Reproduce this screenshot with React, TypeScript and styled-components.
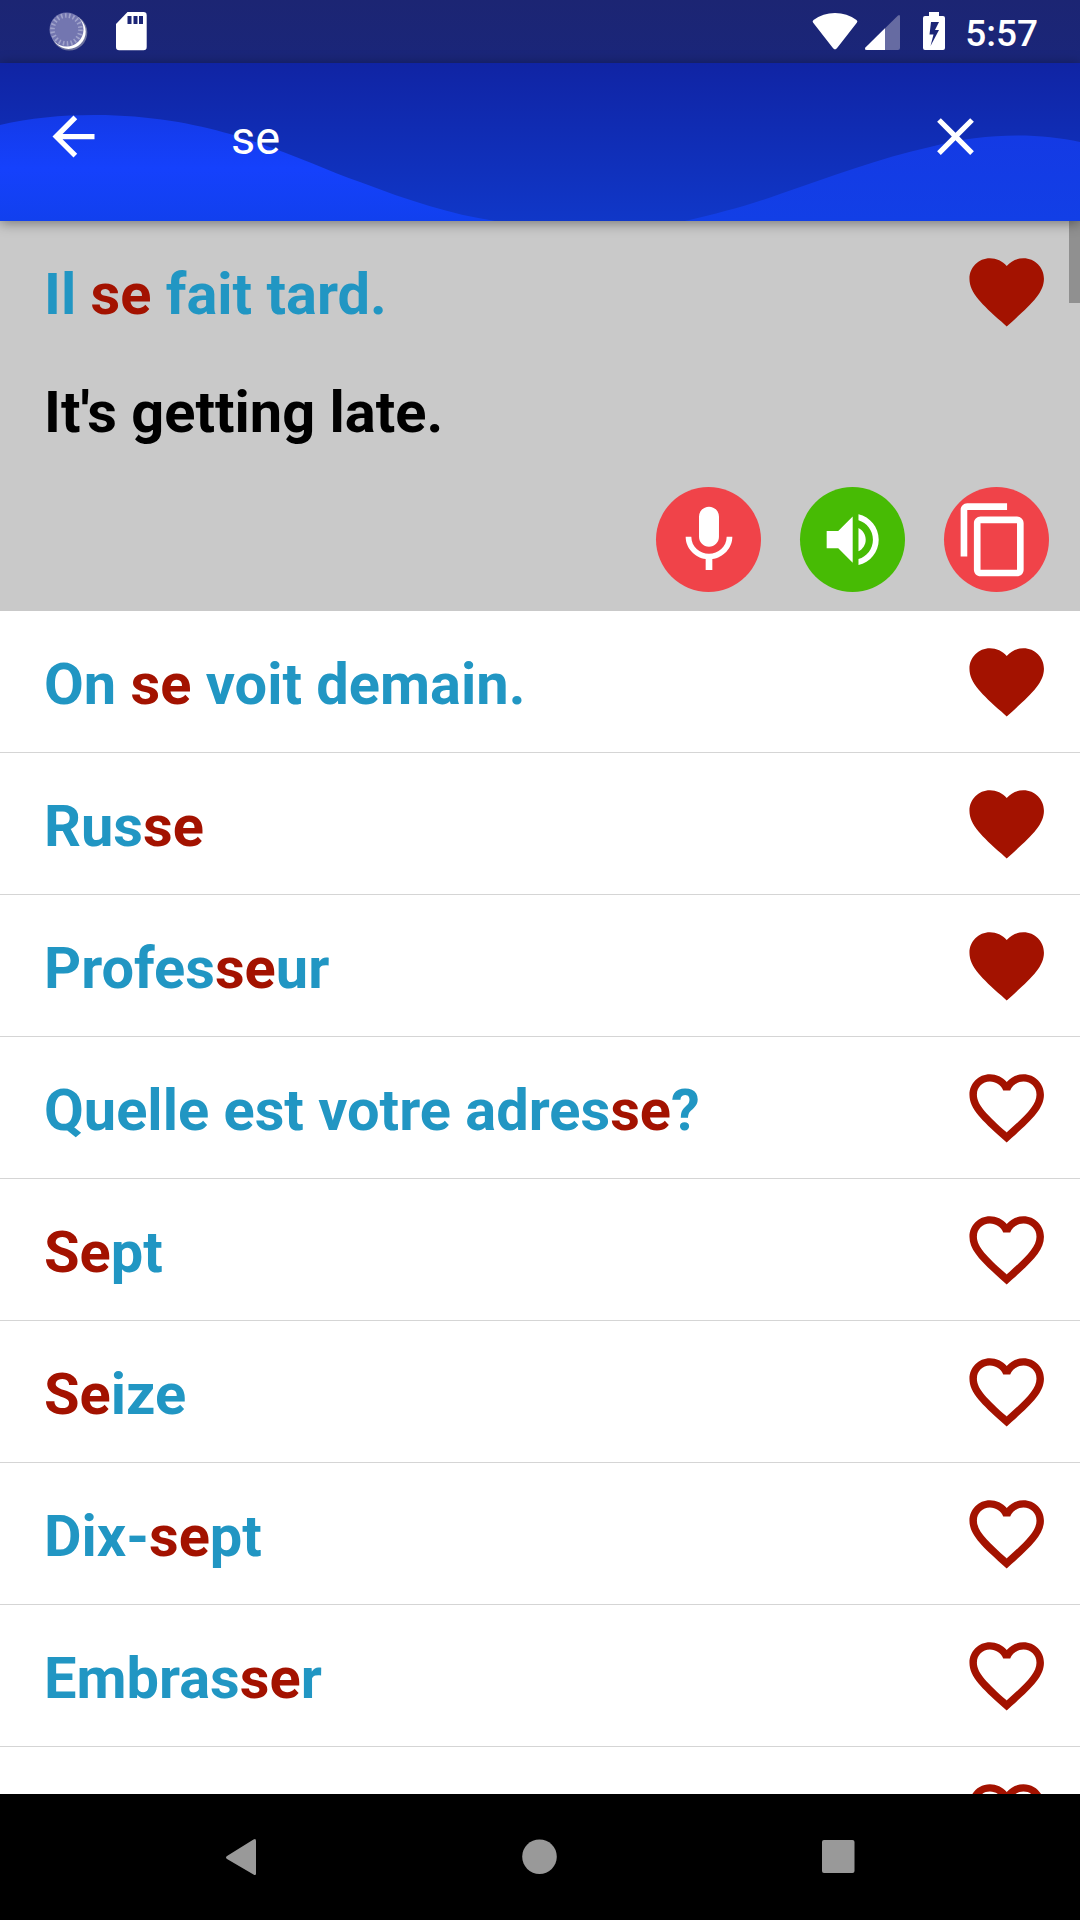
import React from "react";
import styled, { createGlobalStyle } from "styled-components";

const Global = createGlobalStyle`
  html, body { margin: 0; padding: 0; background: #000; }
  * { box-sizing: border-box; }
  svg { display: block; flex: none; }
`;

const Screen = styled.div`
  width: 1080px;
  height: 1920px;
  display: flex;
  flex-direction: column;
  overflow: hidden;
  background: #fff;
  font-family: Roboto, "Liberation Sans", sans-serif;
`;

const StatusBar = styled.div`
  height: 63px;
  flex: none;
  display: flex;
  justify-content: space-between;
  padding: 0 42px 0 48px;
  background: linear-gradient(#1c2573, #1a267a);
`;

const StatusGroup = styled.div`
  display: flex;
  align-items: flex-start;
`;

const Clock = styled.span`
  margin-left: 18px;
  padding-top: 12px;
  font-size: 37px;
  font-weight: 500;
  line-height: 43px;
  color: #fff;
`;

const Header = styled.header`
  height: 158px;
  flex: none;
  display: grid;
  position: relative;
  z-index: 1;
  box-shadow: 0 2px 12px rgba(0, 0, 0, 0.42);
  > * { grid-area: 1 / 1; }
`;

const Toolbar = styled.div`
  position: relative;
  display: flex;
  align-items: center;
  padding: 0 93px 12px 42px;
`;

const Query = styled.div`
  flex: 1;
  padding: 4px 0 0 126px;
  font-size: 47px;
  line-height: 56px;
  color: #fff;
`;

const IconButton = styled.button`
  display: flex;
  padding: 0;
  border: 0;
  background: none;
  color: #fff;
`;

const List = styled.main`
  flex: 1;
  min-height: 0;
  overflow: hidden;
  position: relative;
`;

const ScrollThumb = styled.div`
  position: absolute;
  top: 0;
  right: 0;
  width: 11px;
  height: 82px;
  background: #909090;
`;

const Row = styled.div<{ $open?: boolean }>`
  height: ${(p) => (p.$open ? 390 : 142)}px;
  padding: 26px 29px 0 44px;
  background: ${(p) => (p.$open ? "#c9c9c9" : "#fff")};
  border-bottom: ${(p) => (p.$open ? "0" : "1px solid #d5d5d5")};
`;

const RowHead = styled.div`
  height: 89px;
  display: flex;
  justify-content: space-between;
  align-items: flex-start;
`;

const Phrase = styled.div`
  padding-top: 13px;
  font-size: 57.75px;
  font-weight: 700;
  line-height: 68px;
  white-space: pre;
  color: #2196c3;
`;

const Match = styled.span`
  color: #a31200;
`;

const Translation = styled(Phrase)`
  color: #000;
  padding-top: 42px;
`;

const Actions = styled.div`
  display: flex;
  justify-content: flex-end;
  gap: 39px;
  padding: 41px 2px 0 0;
`;

const Round = styled.button<{ $color: string; $shift?: number }>`
  width: 105px;
  height: 105px;
  display: flex;
  align-items: center;
  justify-content: center;
  border: 0;
  border-radius: 50%;
  padding: 0 ${(p) => p.$shift ?? 0}px 0 0;
  background: ${(p) => p.$color};
  color: #fff;
`;

const NavBar = styled.nav`
  height: 126px;
  flex: none;
  display: flex;
  justify-content: space-between;
  align-items: center;
  padding: 0 222px;
  background: #000;
  color: #999;
`;

const PATHS = {
  back: "M20 11H7.83l5.59-5.59L12 4l-8 8 8 8 1.41-1.41L7.83 13H20v-2z",
  close: "M19 6.41L17.59 5 12 10.59 6.41 5 5 6.41 10.59 12 5 17.59 6.41 19 12 13.41 17.59 19 19 17.59 13.41 12z",
  mic: "M12 14c1.66 0 2.99-1.34 2.99-3L15 5c0-1.66-1.34-3-3-3S9 3.34 9 5v6c0 1.66 1.34 3 3 3zm5.3-3c0 3-2.54 5.1-5.3 5.1S6.7 14 6.7 11H5c0 3.41 2.72 6.23 6 6.72V21h2v-3.28c3.28-.48 6-3.3 6-6.72h-1.7z",
  volume: "M3 9v6h4l5 5V4L7 9H3zm13.5 3c0-1.77-1.02-3.29-2.5-4.03v8.05c1.48-.73 2.5-2.25 2.5-4.02zM14 3.23v2.06c2.89.86 5 3.54 5 6.71s-2.11 5.85-5 6.71v2.06c4.01-.91 7-4.49 7-8.77s-2.99-7.86-7-8.77z",
  copy: "M16 1H4c-1.1 0-2 .9-2 2v14h2V3h12V1zm3 4H8c-1.1 0-2 .9-2 2v14c0 1.1.9 2 2 2h11c1.1 0 2-.9 2-2V7c0-1.1-.9-2-2-2zm0 16H8V7h11v14z",
  heart: "M12 21.35l-1.45-1.32C5.4 15.36 2 12.28 2 8.5 2 5.42 4.42 3 7.5 3c1.74 0 3.41.81 4.5 2.09C13.09 3.81 14.76 3 16.5 3 19.58 3 22 5.42 22 8.5c0 3.78-3.4 6.86-8.55 11.54L12 21.35z",
  heartOutline: "M16.5 3c-1.74 0-3.41.81-4.5 2.09C10.91 3.81 9.24 3 7.5 3 4.42 3 2 5.42 2 8.5c0 3.78 3.4 6.86 8.55 11.54L12 21.35l1.45-1.32C18.6 15.36 22 12.28 22 8.5 22 5.42 19.58 3 16.5 3zm-4.4 15.55l-.1.1-.1-.1C7.14 14.24 4 11.39 4 8.5 4 6.5 5.5 5 7.5 5c1.54 0 3.04.99 3.57 2.36h1.87C13.46 5.99 14.96 5 16.5 5c2 0 3.5 1.5 3.5 3.5 0 2.89-3.14 5.74-7.9 10.05z",
};

function Icon({ name, size, color = "currentColor" }: { name: keyof typeof PATHS; size: number; color?: string }) {
  return (
    <svg width={size} height={size} viewBox="0 0 24 24" fill={color}>
      <path d={PATHS[name]} />
    </svg>
  );
}

function Waves() {
  return (
    <svg width="1080" height="158" viewBox="0 63 1080 158">
      <defs>
        <linearGradient id="sky" x1="0" y1="0" x2="0" y2="1">
          <stop offset="0" stopColor="#1024a4" />
          <stop offset="1" stopColor="#1037c8" />
        </linearGradient>
        <linearGradient id="left" x1="0" y1="0" x2="0" y2="1">
          <stop offset="0" stopColor="#143ae8" />
          <stop offset=".5" stopColor="#1541fc" />
          <stop offset="1" stopColor="#1140ee" />
        </linearGradient>
        <linearGradient id="right" x1="0" y1="0" x2="0" y2="1">
          <stop offset="0" stopColor="#143ae4" />
          <stop offset="1" stopColor="#123fe6" />
        </linearGradient>
      </defs>
      <rect y="63" width="1080" height="158" fill="url(#sky)" />
      <path d="M0 125C30 118 60 115 95 115C150 115 195 124 230 134C285 150 325 170 360 182C410 201 450 214 495 221H0z" fill="url(#left)" />
      <path d="M685 221C720 213 750 205 780 194C830 177 880 158 930 147C985 132 1040 133 1080 142V221z" fill="url(#right)" />
    </svg>
  );
}

type Entry = { text: string; liked?: boolean; translation?: string };

const ENTRIES: Entry[] = [
  { text: "Il *se* fait tard.", liked: true, translation: "It's getting late." },
  { text: "On *se* voit demain.", liked: true },
  { text: "Rus*se*", liked: true },
  { text: "Profes*se*ur", liked: true },
  { text: "Quelle est votre adres*se*?" },
  { text: "*Se*pt" },
  { text: "*Se*ize" },
  { text: "Dix-*se*pt" },
  { text: "Embras*se*r" },
  { text: "" },
];

function PhraseRow({ text, liked, translation }: Entry) {
  return (
    <Row $open={!!translation}>
      <RowHead>
        <Phrase>{text.split("*").map((part, i) => (i % 2 ? <Match key={i}>{part}</Match> : part))}</Phrase>
        <Icon name={liked ? "heart" : "heartOutline"} size={89.4} color="#a31200" />
      </RowHead>
      {translation && (
        <>
          <Translation>{translation}</Translation>
          <Actions>
            <Round $color="#f04349"><Icon name="mic" size={80} /></Round>
            <Round $color="#47bb04"><Icon name="volume" size={69.4} /></Round>
            <Round $color="#f04349" $shift={5}><Icon name="copy" size={79.6} /></Round>
          </Actions>
        </>
      )}
    </Row>
  );
}

export default function App() {
  return (
    <Screen>
      <Global />
      <StatusBar>
        <StatusGroup>
          <svg width="100" height="63" viewBox="48 0 100 63">
            <circle cx="69.300" cy="32.500" r="18" fill="#6d739f" />
            <circle cx="68.500" cy="31.700" r="17.200" fill="#fff" />
            <circle cx="66.500" cy="29.500" r="17" fill="#7376b0" />
            <circle cx="66.500" cy="29.500" r="14" fill="none" stroke="#a0a3cb" strokeWidth="4.600" strokeDasharray="1.600 2.400" />
            <path d="M127.500 12H143.500Q146.700 12 146.700 15.200V47Q146.700 50.200 143.500 50.200H119.200Q116 50.200 116 47V24z" fill="#fff" />
            <path d="M127.500 16h4v8h-4zM133.500 16h4v8h-4zM139 16h4v8h-4z" fill="#1b2576" />
          </svg>
        </StatusGroup>
        <StatusGroup>
          <svg width="136" height="63" viewBox="811 0 136 63">
            <path d="M835 49.500Q833.500 49 832.500 47.500L813 22.500Q812 21 813.500 20Q823 13 835 13T856.500 20Q858 21 857 22.500L837.500 47.500Q836.500 49 835 49.500z" fill="#fff" />
            <path d="M865.500 47.500L898 15.500Q900 14 900 16.500V48Q900 50 898 50H867Q864 50 865.500 47.500z" fill="#666ba2" />
            <path d="M865.500 47.500L885 28.200V50H867Q864 50 865.500 47.500z" fill="#fff" />
            <path fillRule="evenodd" d="M929 12h10v4h4q2 0 2 2V48q0 2-2 2H925q-2 0-2-2V18q0-2 2-2h4zM931 22L929.500 34.500H933.500L930.500 46L939 30H935L939 22z" fill="#fff" />
          </svg>
          <Clock>5:57</Clock>
        </StatusGroup>
      </StatusBar>
      <Header>
        <Waves />
        <Toolbar>
          <IconButton aria-label="Back"><Icon name="back" size={63} /></IconButton>
          <Query>se</Query>
          <IconButton aria-label="Clear"><Icon name="close" size={63} /></IconButton>
        </Toolbar>
      </Header>
      <List>
        {ENTRIES.map((entry, i) => <PhraseRow key={i} {...entry} />)}
        <ScrollThumb />
      </List>
      <NavBar>
        <svg width="36" height="38" viewBox="222 1838 36 38" fill="currentColor">
          <path d="M253.500 1839.500Q256 1838 256 1841V1873.500Q256 1876 253.500 1874.500L227 1859Q225 1857.500 227 1856z" />
        </svg>
        <svg width="36" height="36" viewBox="0 0 36 36" fill="currentColor"><circle cx="17.500" cy="17.700" r="17.300" /></svg>
        <svg width="36" height="36" viewBox="0 0 36 36" fill="currentColor"><rect x="0" y="1" width="32.500" height="33" rx="2" /></svg>
      </NavBar>
    </Screen>
  );
}
